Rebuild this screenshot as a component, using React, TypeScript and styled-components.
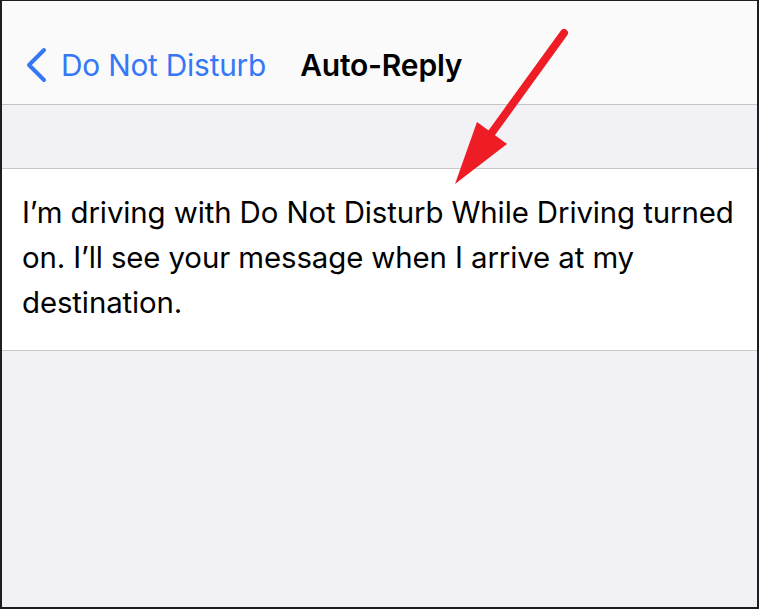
import React from "react";
import styled, { createGlobalStyle } from "styled-components";

const GlobalStyle = createGlobalStyle`
  html, body {
    margin: 0;
    padding: 0;
    background: #f2f2f7;
  }
  * {
    box-sizing: border-box;
  }
`;

const Frame = styled.div`
  position: relative;
  display: flex;
  flex-direction: column;
  width: 759px;
  height: 609px;
  background-color: #f2f1f6;
  border: 2px solid #1e1e1e;
  border-top-width: 1px;
  font-family: Inter, "Liberation Sans", sans-serif;
  overflow: hidden;
`;

const NavBar = styled.div`
  display: flex;
  align-items: center;
  height: 104px;
  padding: 24px 0 0 22px;
  background-color: #fafafa;
  border-bottom: 1px solid #c4c4c6;
`;

const BackButton = styled.div`
  display: flex;
  align-items: center;
  gap: 13px;
  color: #3478f6;
  font-size: 29.8px;
  letter-spacing: -0.2px;
`;

const Title = styled.div`
  margin-left: 34px;
  color: #000;
  font-size: 30px;
  font-weight: 600;
  letter-spacing: -0.2px;
`;

const GroupGap = styled.div`
  height: 64px;
  border-bottom: 1px solid #c8c8ca;
`;

const Cell = styled.div`
  padding: 21px 16px 25px 20px;
  background-color: #fff;
  border-bottom: 1px solid #c8c8ca;
  color: #000;
  font-size: 29.4px;
  line-height: 45px;
  letter-spacing: -0.1px;
`;

const Arrow = styled.svg`
  position: absolute;
  top: 0;
  left: 0;
  pointer-events: none;
`;

const App = () => {
  return (
    <>
      <GlobalStyle />
      <Frame>
        <NavBar>
          <BackButton>
            <svg width="24" height="36" viewBox="0 0 24 36">
              <path
                d="M20 3 L5 18 L20 33"
                fill="none"
                stroke="#3478f6"
                strokeWidth="4"
                strokeLinecap="round"
                strokeLinejoin="round"
              />
            </svg>
            <span>Do Not Disturb</span>
          </BackButton>
          <Title>Auto-Reply</Title>
        </NavBar>
        <GroupGap />
        <Cell>
          I’m driving with Do Not Disturb While Driving turned on. I’ll see your message when I arrive at my
          destination.
        </Cell>
        <Arrow width="759" height="609" viewBox="0 0 759 609">
          <line x1="562" y1="32" x2="478" y2="148" stroke="#ee1c25" strokeWidth="8" strokeLinecap="round" />
          <polygon points="453,183 475,121 505,143" fill="#ee1c25" />
        </Arrow>
      </Frame>
    </>
  );
};

export default App;
